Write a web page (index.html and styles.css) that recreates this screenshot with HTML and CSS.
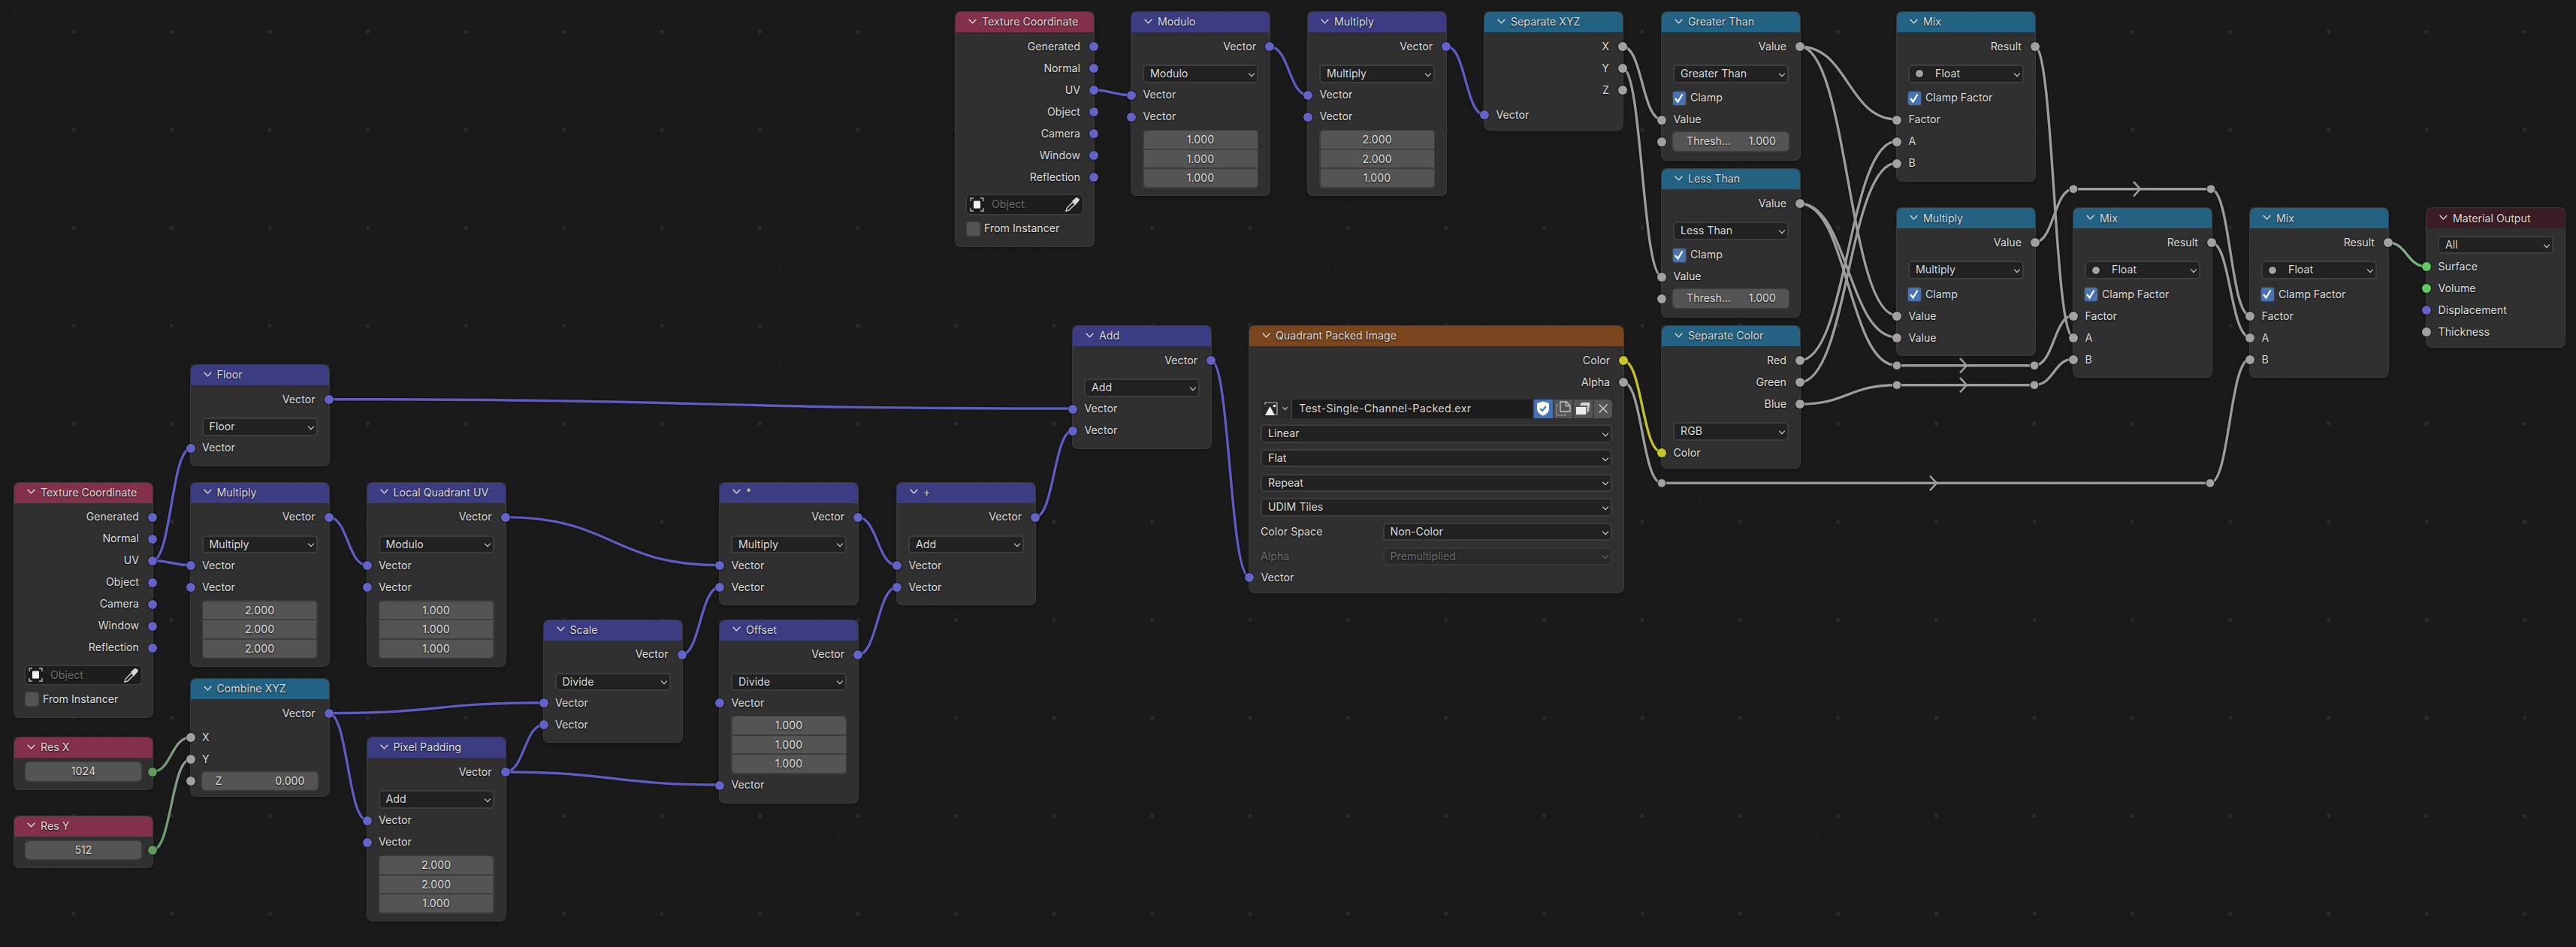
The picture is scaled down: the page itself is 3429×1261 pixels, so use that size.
FILE: index.html
```html
<!DOCTYPE html>
<html lang="en">
<head>
<meta charset="utf-8">
<title>Shader Editor</title>
<link rel="stylesheet" href="styles.css">
</head>
<body>
<svg class="defs" width="0" height="0">
  <symbol id="chev" viewBox="0 0 11 7"><path d="M.7.7 5.5 5.9 10.3.7" fill="none" stroke="#e0e0e0" stroke-width="1.3"/></symbol>
  <symbol id="obj" viewBox="0 0 19 19"><path d="M1 5V1h4M14 1h4v4M18 14v4h-4M5 18H1v-4" fill="none" stroke="#b4b4b4" stroke-width="1.4"/><rect x="5" y="4.5" width="9" height="10" rx="1" fill="#f0f0f0"/></symbol>
  <symbol id="drop" viewBox="0 0 20 20"><path d="M1 19l1.2-4L10 7l3 3-8 7.8z" fill="none" stroke="#d8d8d8" stroke-width="1.3"/><path d="M9 5l1.6-.4L14 1.3c1.3-1 3.8 1 4.6 1.800.8 1-.2 2.500-1.400 3.700l-2.800 3 -.4 1.700z" fill="#d8d8d8"/></symbol>
  <symbol id="check" viewBox="0 0 16 17"><path d="M3 9l3.500 4.500L12.500 3.500" fill="none" stroke="#fff" stroke-width="2.300"/></symbol>
</svg>
<main class="canvas">
  <svg class="wires" width="3429" height="1261" viewBox="0 0 3429 1261">
    <defs>
      <linearGradient id="g-out" gradientUnits="userSpaceOnUse" x1="3179" y1="0" x2="3230" y2="0"><stop offset="0" stop-color="#9c9c9c"/><stop offset="1" stop-color="#5fc05f"/></linearGradient>
      <linearGradient id="g-res" gradientUnits="userSpaceOnUse" x1="203" y1="0" x2="254" y2="0"><stop offset="0" stop-color="#5b9a5b"/><stop offset="1" stop-color="#9c9c9c"/></linearGradient>
    </defs>
    <g class="wv">
      <path d="M203 746.500C228 746.500 228 752.600 254 752.600"/>
      <path d="M203 746.500C228 746.500 228 597 254 597"/>
      <path d="M437.500 688.600C463 688.600 463 752.600 488.400 752.600"/>
      <path d="M672.400 688.600C815 688.600 815 752.600 958 752.600"/>
      <path d="M437.500 949.800C581 949.800 581 935.700 724 935.700"/>
      <path d="M437.500 949.800C463 949.800 463 1092 488.400 1092"/>
      <path d="M672.400 1028C698 1028 698 965 724 965"/>
      <path d="M672.400 1028C816 1028 816 1045 959 1045"/>
      <path d="M907 872C932 872 932 782 958 782"/>
      <path d="M1141.600 688.600C1168 688.600 1168 752.600 1194 752.600"/>
      <path d="M1141.800 872C1168 872 1168 782 1194 782"/>
      <path d="M1378 688.600C1403 688.600 1403 573 1428.300 573"/>
      <path d="M437.300 531.700C933 531.700 933 544 1428.300 544"/>
      <path d="M1612.300 480C1637 480 1637 768 1662.800 768"/>
      <path d="M1456 120C1481 120 1481 126.700 1506.400 126.700"/>
      <path d="M1690 62C1716 62 1716 126.700 1741 126.700"/>
      <path d="M1926 62C1951 62 1951 153 1976 153"/>
    </g>
    <g class="wg">
      <path d="M2160 62C2186 62 2186 159 2212 159"/>
      <path d="M2160 91C2186 91 2186 368 2212 368"/>
      <path d="M2395.500 62C2460 62 2460 159 2525 159"/>
      <path d="M2395.500 62C2460 62 2460 420 2525 420"/>
      <path d="M2395.500 271C2460 271 2460 449 2525 449"/>
      <path d="M2395.500 271C2460 271 2460 486.700 2525 486.700"/>
      <path d="M2395.500 480C2460 480 2460 188 2525 188"/>
      <path d="M2395.500 509C2460 509 2460 217 2525 217"/>
      <path d="M2395.500 538C2460 538 2460 512.700 2525 512.700"/>
      <path d="M2708 486.700C2734 486.700 2734 420 2760 420"/>
      <path d="M2708 512.700C2734 512.700 2734 478 2760 478"/>
      <path d="M2708.500 62C2734 62 2734 449 2760 449"/>
      <path d="M2708.500 322.700C2734 322.700 2734 251.700 2760 251.700"/>
      <path d="M2943 251.700C2969 251.700 2969 420 2995 420"/>
      <path d="M2943.700 323C2969 323 2969 449 2995 449"/>
      <path d="M2942 643.300C2968 643.300 2968 478 2995 478"/>
      <path d="M2160.600 508.700C2186 508.700 2186 643.300 2212 643.300"/>
      <path d="M2525 486.700H2708M2525 512.700H2708M2760 251.700H2943M2212 643.300H2942"/>
      <path class="chv" d="M2609 477l9 9.700-9 9.700M2609 503l9 9.700-9 9.700M2840 242l9 9.700-9 9.700M2569 633.600l9 9.700-9 9.700"/>
    </g>
    <g class="wy"><path d="M2160.600 480C2186 480 2186 602 2212 602"/></g>
    <g class="wm">
      <path stroke="url(#g-out)" d="M3178.600 323C3204 323 3204 355 3230 355"/>
      <path stroke="url(#g-res)" d="M203 1027.800C228 1027.800 228 981.600 254 981.600"/>
      <path stroke="url(#g-res)" d="M203 1132C228 1132 228 1010.600 254 1010.600"/>
    </g>
    <g class="rr">
      <circle cx="2525" cy="486.700" r="5.800"/><circle cx="2708" cy="486.700" r="5.800"/>
      <circle cx="2525" cy="512.700" r="5.800"/><circle cx="2708" cy="512.700" r="5.800"/>
      <circle cx="2760" cy="251.700" r="5.800"/><circle cx="2943" cy="251.700" r="5.800"/>
      <circle cx="2212" cy="643.300" r="5.800"/><circle cx="2942" cy="643.300" r="5.800"/>
    </g>
  </svg>

  <!-- top row -->
  <section class="node at-tc2">
    <header class="hd red"><svg class="chev"><use href="#chev"/></svg>Texture Coordinate</header>
    <div class="body tc">
      <div class="row out">Generated<i class="s v"></i></div>
      <div class="row out">Normal<i class="s v"></i></div>
      <div class="row out">UV<i class="s v"></i></div>
      <div class="row out">Object<i class="s v"></i></div>
      <div class="row out">Camera<i class="s v"></i></div>
      <div class="row out">Window<i class="s v"></i></div>
      <div class="row out">Reflection<i class="s v"></i></div>
      <div class="objf"><svg class="ic19"><use href="#obj"/></svg><span class="dim">Object</span><svg class="ic20"><use href="#drop"/></svg></div>
      <div class="row cb"><span class="box"></span>From Instancer</div>
    </div>
  </section>
  <section class="node at-mod">
    <header class="hd blue"><svg class="chev"><use href="#chev"/></svg>Modulo</header>
    <div class="body">
      <div class="row out">Vector<i class="s v"></i></div>
      <div class="dd">Modulo</div>
      <div class="row in mt">Vector<i class="s v"></i></div>
      <div class="row in">Vector<i class="s v"></i></div>
      <div class="fld"><div>1.000</div><div>1.000</div><div>1.000</div></div>
    </div>
  </section>
  <section class="node at-mul2">
    <header class="hd blue"><svg class="chev"><use href="#chev"/></svg>Multiply</header>
    <div class="body">
      <div class="row out">Vector<i class="s v"></i></div>
      <div class="dd">Multiply</div>
      <div class="row in mt">Vector<i class="s v"></i></div>
      <div class="row in">Vector<i class="s v"></i></div>
      <div class="fld"><div>2.000</div><div>2.000</div><div>1.000</div></div>
    </div>
  </section>
  <section class="node at-sep">
    <header class="hd teal"><svg class="chev"><use href="#chev"/></svg>Separate XYZ</header>
    <div class="body short">
      <div class="row out">X<i class="s g"></i></div>
      <div class="row out">Y<i class="s g"></i></div>
      <div class="row out">Z<i class="s g"></i></div>
      <div class="row in mt4">Vector<i class="s v"></i></div>
    </div>
  </section>
  <section class="node at-gt">
    <header class="hd teal"><svg class="chev"><use href="#chev"/></svg>Greater Than</header>
    <div class="body thr">
      <div class="row out">Value<i class="s g"></i></div>
      <div class="dd">Greater Than</div>
      <div class="row cb mt5"><span class="box on"><svg><use href="#check"/></svg></span>Clamp</div>
      <div class="row in">Value<i class="s g"></i></div>
      <div class="row in mid"><i class="s g"></i><div class="fl"><span>Thresh...</span><span>1.000</span></div></div>
    </div>
  </section>
  <section class="node at-lt">
    <header class="hd teal"><svg class="chev"><use href="#chev"/></svg>Less Than</header>
    <div class="body thr">
      <div class="row out">Value<i class="s g"></i></div>
      <div class="dd">Less Than</div>
      <div class="row cb mt5"><span class="box on"><svg><use href="#check"/></svg></span>Clamp</div>
      <div class="row in">Value<i class="s g"></i></div>
      <div class="row in mid"><i class="s g"></i><div class="fl"><span>Thresh...</span><span>1.000</span></div></div>
    </div>
  </section>
  <section class="node at-mix1">
    <header class="hd teal"><svg class="chev"><use href="#chev"/></svg>Mix</header>
    <div class="body">
      <div class="row out">Result<i class="s g"></i></div>
      <div class="dd float"><i class="dot"></i>Float</div>
      <div class="row cb mt5"><span class="box on"><svg><use href="#check"/></svg></span>Clamp Factor</div>
      <div class="row in">Factor<i class="s g"></i></div>
      <div class="row in">A<i class="s g"></i></div>
      <div class="row in">B<i class="s g"></i></div>
    </div>
  </section>
  <section class="node at-mul3">
    <header class="hd teal"><svg class="chev"><use href="#chev"/></svg>Multiply</header>
    <div class="body">
      <div class="row out">Value<i class="s g"></i></div>
      <div class="dd">Multiply</div>
      <div class="row cb mt5"><span class="box on"><svg><use href="#check"/></svg></span>Clamp</div>
      <div class="row in">Value<i class="s g"></i></div>
      <div class="row in">Value<i class="s g"></i></div>
    </div>
  </section>
  <section class="node at-mix2">
    <header class="hd teal"><svg class="chev"><use href="#chev"/></svg>Mix</header>
    <div class="body">
      <div class="row out">Result<i class="s g"></i></div>
      <div class="dd float"><i class="dot"></i>Float</div>
      <div class="row cb mt5"><span class="box on"><svg><use href="#check"/></svg></span>Clamp Factor</div>
      <div class="row in">Factor<i class="s g"></i></div>
      <div class="row in">A<i class="s g"></i></div>
      <div class="row in">B<i class="s g"></i></div>
    </div>
  </section>
  <section class="node at-mix3">
    <header class="hd teal"><svg class="chev"><use href="#chev"/></svg>Mix</header>
    <div class="body">
      <div class="row out">Result<i class="s g"></i></div>
      <div class="dd float"><i class="dot"></i>Float</div>
      <div class="row cb mt5"><span class="box on"><svg><use href="#check"/></svg></span>Clamp Factor</div>
      <div class="row in">Factor<i class="s g"></i></div>
      <div class="row in">A<i class="s g"></i></div>
      <div class="row in">B<i class="s g"></i></div>
    </div>
  </section>
  <section class="node at-mat">
    <header class="hd wine"><svg class="chev"><use href="#chev"/></svg>Material Output</header>
    <div class="body mat">
      <div class="dd">All</div>
      <div class="row in mt2">Surface<i class="s e"></i></div>
      <div class="row in">Volume<i class="s e"></i></div>
      <div class="row in">Displacement<i class="s v"></i></div>
      <div class="row in">Thickness<i class="s g"></i></div>
    </div>
  </section>

  <!-- image -->
  <section class="node wide at-img">
    <header class="hd brown"><svg class="chev"><use href="#chev"/></svg>Quadrant Packed Image</header>
    <div class="body short">
      <div class="row out">Color<i class="s y"></i></div>
      <div class="row out">Alpha<i class="s g"></i></div>
      <div class="imgrow">
        <div class="imgsel">
          <svg class="ic19" viewBox="0 0 19 19"><path d="M3 1h14v16h-3M1 4V1h2" fill="none" stroke="#b4b4b4" stroke-width="1.200"/><path d="M1 18 7.500 6 14 18z" fill="#f0f0f0"/><circle cx="13.500" cy="5.500" r="1.800" fill="#f0f0f0"/></svg>
          <span class="mini"></span>
        </div>
        <div class="imgname">Test-Single-Channel-Packed.exr</div>
        <div class="imgbtn act"><svg width="18" height="20" viewBox="0 0 18 20"><path d="M9 .5 17 3v7c0 5-4 7.500-8 9.500C5 17.500 1 15 1 10V3z" fill="#fff"/><path d="M5 10l3 3 5-6" fill="none" stroke="#4772b3" stroke-width="2"/></svg></div>
        <div class="imgbtn"><svg width="20" height="20" viewBox="0 0 20 20"><path d="M6 14V1h8l5 5v8z" fill="none" stroke="#c8c8c8" stroke-width="1.300"/><path d="M13.500 1v5.500H19" fill="none" stroke="#c8c8c8" stroke-width="1.300"/><path d="M3.500 4.500H1V19h12v-2.500" fill="none" stroke="#8c8c8c" stroke-width="1.300"/></svg></div>
        <div class="imgbtn"><svg width="20" height="20" viewBox="0 0 20 20"><path d="M8 2h11v6l-3 2V6H6z" fill="#d8d8d8"/><path d="M1 8h13v10H1z" fill="#ececec"/><path d="M15 7.500l3.500-1.500v6.500L15 17z" fill="#b8b8b8"/></svg></div>
        <div class="imgbtn"><svg width="14" height="14" viewBox="0 0 14 14"><path d="M1.500 1.500l11 11M12.500 1.500l-11 11" stroke="#d8d8d8" stroke-width="1.200"/></svg></div>
      </div>
      <div class="dd wd">Linear</div>
      <div class="dd wd">Flat</div>
      <div class="dd wd">Repeat</div>
      <div class="dd wd">UDIM Tiles</div>
      <div class="lab wd"><span>Color Space</span><div class="dd">Non-Color</div></div>
      <div class="lab wd off"><span>Alpha</span><div class="dd">Premultiplied</div></div>
      <div class="row in mt">Vector<i class="s v"></i></div>
    </div>
  </section>
  <section class="node at-sc">
    <header class="hd teal"><svg class="chev"><use href="#chev"/></svg>Separate Color</header>
    <div class="body short">
      <div class="row out">Red<i class="s g"></i></div>
      <div class="row out">Green<i class="s g"></i></div>
      <div class="row out">Blue<i class="s g"></i></div>
      <div class="dd">RGB</div>
      <div class="row in mt2">Color<i class="s y"></i></div>
    </div>
  </section>
  <section class="node at-add">
    <header class="hd blue"><svg class="chev"><use href="#chev"/></svg>Add</header>
    <div class="body">
      <div class="row out">Vector<i class="s v"></i></div>
      <div class="dd">Add</div>
      <div class="row in mt">Vector<i class="s v"></i></div>
      <div class="row in">Vector<i class="s v"></i></div>
    </div>
  </section>

  <!-- left group -->
  <section class="node at-floor">
    <header class="hd blue"><svg class="chev"><use href="#chev"/></svg>Floor</header>
    <div class="body">
      <div class="row out">Vector<i class="s v"></i></div>
      <div class="dd">Floor</div>
      <div class="row in mt">Vector<i class="s v"></i></div>
    </div>
  </section>
  <section class="node at-tc1">
    <header class="hd red"><svg class="chev"><use href="#chev"/></svg>Texture Coordinate</header>
    <div class="body tc">
      <div class="row out">Generated<i class="s v"></i></div>
      <div class="row out">Normal<i class="s v"></i></div>
      <div class="row out">UV<i class="s v"></i></div>
      <div class="row out">Object<i class="s v"></i></div>
      <div class="row out">Camera<i class="s v"></i></div>
      <div class="row out">Window<i class="s v"></i></div>
      <div class="row out">Reflection<i class="s v"></i></div>
      <div class="objf"><svg class="ic19"><use href="#obj"/></svg><span class="dim">Object</span><svg class="ic20"><use href="#drop"/></svg></div>
      <div class="row cb"><span class="box"></span>From Instancer</div>
    </div>
  </section>
  <section class="node at-mul1">
    <header class="hd blue"><svg class="chev"><use href="#chev"/></svg>Multiply</header>
    <div class="body">
      <div class="row out">Vector<i class="s v"></i></div>
      <div class="dd">Multiply</div>
      <div class="row in mt">Vector<i class="s v"></i></div>
      <div class="row in">Vector<i class="s v"></i></div>
      <div class="fld"><div>2.000</div><div>2.000</div><div>2.000</div></div>
    </div>
  </section>
  <section class="node at-lq">
    <header class="hd blue"><svg class="chev"><use href="#chev"/></svg>Local Quadrant UV</header>
    <div class="body">
      <div class="row out">Vector<i class="s v"></i></div>
      <div class="dd">Modulo</div>
      <div class="row in mt">Vector<i class="s v"></i></div>
      <div class="row in">Vector<i class="s v"></i></div>
      <div class="fld"><div>1.000</div><div>1.000</div><div>1.000</div></div>
    </div>
  </section>
  <section class="node at-star">
    <header class="hd blue"><svg class="chev"><use href="#chev"/></svg>*</header>
    <div class="body">
      <div class="row out">Vector<i class="s v"></i></div>
      <div class="dd">Multiply</div>
      <div class="row in mt">Vector<i class="s v"></i></div>
      <div class="row in">Vector<i class="s v"></i></div>
    </div>
  </section>
  <section class="node at-plus">
    <header class="hd blue"><svg class="chev"><use href="#chev"/></svg>+</header>
    <div class="body">
      <div class="row out">Vector<i class="s v"></i></div>
      <div class="dd">Add</div>
      <div class="row in mt">Vector<i class="s v"></i></div>
      <div class="row in">Vector<i class="s v"></i></div>
    </div>
  </section>
  <section class="node at-scale">
    <header class="hd blue"><svg class="chev"><use href="#chev"/></svg>Scale</header>
    <div class="body">
      <div class="row out">Vector<i class="s v"></i></div>
      <div class="dd">Divide</div>
      <div class="row in mt">Vector<i class="s v"></i></div>
      <div class="row in">Vector<i class="s v"></i></div>
    </div>
  </section>
  <section class="node at-off">
    <header class="hd blue"><svg class="chev"><use href="#chev"/></svg>Offset</header>
    <div class="body">
      <div class="row out">Vector<i class="s v"></i></div>
      <div class="dd">Divide</div>
      <div class="row in mt">Vector<i class="s v"></i></div>
      <div class="fld flat"><div>1.000</div><div>1.000</div><div>1.000</div></div>
      <div class="row in">Vector<i class="s v"></i></div>
    </div>
  </section>
  <section class="node at-comb">
    <header class="hd teal"><svg class="chev"><use href="#chev"/></svg>Combine XYZ</header>
    <div class="body short">
      <div class="row out">Vector<i class="s v"></i></div>
      <div class="row in mt3">X<i class="s g"></i></div>
      <div class="row in">Y<i class="s g"></i></div>
      <div class="row in mid"><i class="s g"></i><div class="fl"><span>Z</span><span>0.000</span></div></div>
    </div>
  </section>
  <section class="node at-resx">
    <header class="hd red"><svg class="chev"><use href="#chev"/></svg>Res X</header>
    <div class="body val">
      <div class="row out mid"><div class="fl cen">1024</div><i class="s e2"></i></div>
    </div>
  </section>
  <section class="node at-resy">
    <header class="hd red"><svg class="chev"><use href="#chev"/></svg>Res Y</header>
    <div class="body val">
      <div class="row out mid"><div class="fl cen">512</div><i class="s e2"></i></div>
    </div>
  </section>
  <section class="node at-pad">
    <header class="hd blue"><svg class="chev"><use href="#chev"/></svg>Pixel Padding</header>
    <div class="body">
      <div class="row out">Vector<i class="s v"></i></div>
      <div class="dd">Add</div>
      <div class="row in mt">Vector<i class="s v"></i></div>
      <div class="row in">Vector<i class="s v"></i></div>
      <div class="fld"><div>2.000</div><div>2.000</div><div>1.000</div></div>
    </div>
  </section>
</main>
</body>
</html>
```

FILE: styles.css
```css
* { box-sizing: border-box; }
html, body { margin: 0; padding: 0; background: #1a1a1a; }
body { width: 3429px; height: 1261px; overflow: hidden; }
.defs { position: absolute; }

.canvas {
  position: relative;
  width: 3429px;
  height: 1261px;
  font: 14.2px/1 "Inter", "Liberation Sans", sans-serif;
  color: #dedede;
  background-color: #1a1a1a;
  background-image:
    radial-gradient(circle, #2c2c2c 2.2px, transparent 2.8px),
    radial-gradient(circle, #212121 1px, transparent 1.6px);
  background-size: 130.5px 130.5px, 26.1px 26.1px;
  background-position: 32.75px -23.05px, 6.65px 3.05px;
}

.wires { position: absolute; left: 0; top: 0; }
.wires path { fill: none; stroke-width: 3.4; }
.wv, .wg, .wy, .wm { filter: drop-shadow(0 0 1px rgba(0,0,0,.75)); }
.wv path { stroke: #5d5dc0; }
.wg path { stroke: #9c9c9c; }
.wy path { stroke: #c2c226; }
.wires .chv { stroke-width: 2.6; }
.rr circle { fill: #a1a1a1; stroke: #1c1c1c; stroke-width: 1; }

/* nodes */
.node {
  position: absolute;
  width: 184px;
  background: #303030;
  border-radius: 7px;
  box-shadow: 0 0 0 1px #3b3b3b, 0 2px 4px rgba(0,0,0,.35);
  text-shadow: 0 1px 2px rgba(0,0,0,.9);
}
.wide { width: 498px; }
.at-tc2 { left: 1272px; top: 16px; }
.at-mod { left: 1506px; top: 16px; }
.at-mul2 { left: 1741px; top: 16px; }
.at-sep { left: 1976px; top: 16px; }
.at-gt { left: 2212px; top: 16px; }
.at-lt { left: 2212px; top: 225px; }
.at-mix1 { left: 2525px; top: 16px; }
.at-mul3 { left: 2525px; top: 277.3px; }
.at-mix2 { left: 2760px; top: 277.3px; }
.at-mix3 { left: 2995px; top: 277.3px; }
.at-mat { left: 3230px; top: 277.3px; }
.at-img { left: 1663px; top: 434px; }
.at-sc { left: 2212px; top: 434px; }
.at-add { left: 1428px; top: 434px; }
.at-floor { left: 253.500px; top: 486px; }
.at-tc1 { left: 19px; top: 642.5px; }
.at-mul1 { left: 253.500px; top: 642.5px; }
.at-lq { left: 488.500px; top: 642.5px; }
.at-star { left: 958px; top: 642.5px; }
.at-plus { left: 1194px; top: 642.5px; }
.at-scale { left: 723.500px; top: 825.5px; }
.at-off { left: 958px; top: 825.5px; }
.at-comb { left: 253.500px; top: 904px; }
.at-resx { left: 19px; top: 982px; }
.at-resy { left: 19px; top: 1086.5px; }
.at-pad { left: 488.500px; top: 982px; }

.hd {
  display: flex;
  align-items: center;
  height: 27px;
  padding-left: 17px;
  border-radius: 7px 7px 0 0;
  color: #dcdcdc;
}
.chev { width: 11px; height: 7px; margin: -3px 7px 0 0; flex: none; }
.red { background: #83314a; }
.blue { background: #3c3c83; }
.teal { background: #246283; }
.brown { background: #79461d; }
.wine { background: #3c1d26; }

.body { padding: 4.5px 0 8.5px; }
.body.short { padding-bottom: 5.5px; }
.body.thr { padding-bottom: 9.5px; }
.body.mat { padding: 9.5px 0 6px; }
.body.val { padding: 4px 0 8.5px; }
.body.tc { padding-bottom: 9px; }

.row {
  position: relative;
  display: flex;
  align-items: center;
  height: 29px;
  padding: 0 15.5px;
}
.row.out { justify-content: flex-end; padding-right: 18px; }
.row.mid { padding: 0 15px; }
.mt { margin-top: 1.5px; }
.mt2 { margin-top: 2px; }
.mt3 { margin-top: 3px; }
.mt4 { margin-top: 4px; }
.mt5 { margin-top: 5.5px; }

/* sockets */
.s {
  position: absolute;
  top: 50%;
  width: 12px;
  height: 12px;
  margin-top: -6px;
  border-radius: 50%;
  box-shadow: 0 0 0 1px rgba(0,0,0,.45);
}
.row.in .s { left: -6px; }
.row.out .s { right: -6px; }
.v { background: #6363c7; }
.g { background: #a1a1a1; }
.y { background: #c7c729; }
.e { background: #63c763; }
.e2 { background: #5f9a5f; }

/* widgets */
.dd {
  position: relative;
  display: flex;
  align-items: center;
  height: 24.5px;
  margin: 9.5px 15px 0;
  padding-left: 8px;
  background: #222;
  border: 2px solid #3d3d3d;
  border-radius: 5px;
}
.mat .dd { margin-top: 0; }
.dd::after {
  content: "";
  position: absolute;
  right: 4px;
  top: 50%;
  width: 5px;
  height: 5px;
  margin-top: -3.5px;
  border-right: 1.3px solid #e0e0e0;
  border-bottom: 1.3px solid #e0e0e0;
  transform: rotate(45deg);
}
.dd.float { padding-left: 34px; }
.dot {
  position: absolute;
  left: 8px;
  top: 50%;
  width: 10px;
  height: 10px;
  margin-top: -5px;
  border-radius: 50%;
  background: #a1a1a1;
  box-shadow: 0 0 0 1px rgba(0,0,0,.5);
}
.fld {
  display: flex;
  flex-direction: column;
  gap: 2px;
  margin: 2.5px 15px 1px;
  padding: 1.5px;
  background: #3d3d3d;
  border-radius: 5px;
}
.fld.flat { margin: 2px 15px .5px; }
.fld > div {
  height: 23.7px;
  line-height: 23.7px;
  text-align: center;
  background: #545454;
}
.fld > div:first-child { border-radius: 4px 4px 0 0; }
.fld > div:last-child { border-radius: 0 0 4px 4px; }
.fl {
  display: flex;
  flex: 1;
  align-items: center;
  justify-content: space-between;
  height: 24.5px;
  padding: 0 17px 0 18px;
  background: #545454;
  border-radius: 5px;
  box-shadow: 0 0 0 1.5px #3d3d3d;
}
.fl.cen { justify-content: center; padding: 0; }

.cb { padding-left: 15px; }
.box {
  display: block;
  flex: none;
  width: 17px;
  height: 18px;
  margin-right: 6px;
  background: #545454;
  border-radius: 3px;
  box-shadow: 0 0 0 1.5px #3d3d3d;
}
.box.on { background: #4772b3; }
.box svg { display: block; width: 16px; height: 17px; }

.objf {
  display: flex;
  align-items: center;
  height: 24.5px;
  margin: 9.5px 15px 5.5px;
  padding: 0 3px 0 4px;
  background: #1d1d1d;
  border-radius: 5px;
  box-shadow: 0 0 0 1.5px #3d3d3d;
}
.ic19 { width: 19px; height: 19px; flex: none; }
.ic20 { width: 20px; height: 20px; flex: none; margin-left: auto; }
.dim { margin-left: 10px; color: #6e6e6e; }

.imgrow {
  display: flex;
  gap: 2px;
  height: 25.5px;
  margin: 8px 15px 0;
  background: #3d3d3d;
  border-radius: 5px;
}
.imgsel {
  display: flex;
  align-items: center;
  width: 40px;
  padding-left: 5px;
  background: #2a2a2a;
  border-radius: 5px 0 0 5px;
}
.mini {
  width: 5px;
  height: 5px;
  margin: -3px 0 0 6px;
  border-right: 1.2px solid #ddd;
  border-bottom: 1.2px solid #ddd;
  transform: rotate(45deg);
}
.imgname {
  flex: 1;
  display: flex;
  align-items: center;
  padding-left: 9px;
  background: #1d1d1d;
  letter-spacing: .35px;
}
.imgbtn {
  display: flex;
  align-items: center;
  justify-content: center;
  width: 24.5px;
  background: #545454;
}
.imgbtn:last-child { border-radius: 0 5px 5px 0; }
.imgbtn.act { background: #4772b3; }

.dd.wd { margin: 8.2px 15px 0; }
.lab {
  display: flex;
  align-items: center;
  height: 24.5px;
  margin: 8.2px 15px 0;
}
.lab span { width: 162.5px; flex: none; }
.lab .dd { flex: 1; margin: 0; }
.lab.off { color: #6e6e6e; }
.lab.off .dd { background: #2a2a2a; border-color: #373737; }
.lab.off .dd::after { border-color: #6e6e6e; }
```
